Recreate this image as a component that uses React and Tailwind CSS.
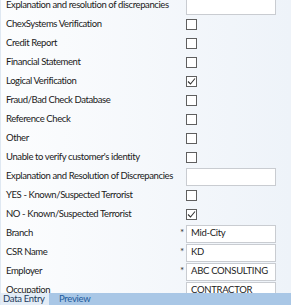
import React from 'react';

const rows = [
  { label: 'Explanation and resolution of discrepancies', type: 'input', value: '' },
  { label: 'ChexSystems Verification', type: 'check' },
  { label: 'Credit Report', type: 'check' },
  { label: 'Financial Statement', type: 'check' },
  { label: 'Logical Verification', type: 'check', checked: true },
  { label: 'Fraud/Bad Check Database', type: 'check' },
  { label: 'Reference Check', type: 'check' },
  { label: 'Other', type: 'check' },
  { label: "Unable to verify customer's identity", type: 'check' },
  { label: 'Explanation and Resolution of Discrepancies', type: 'input', value: '' },
  { label: 'YES - Known/Suspected Terrorist', type: 'check' },
  { label: 'NO - Known/Suspected Terrorist', type: 'check', checked: true },
  { label: 'Branch', type: 'input', value: 'Mid-City', required: true },
  { label: 'CSR Name', type: 'input', value: 'KD', required: true },
  { label: 'Employer', type: 'input', value: 'ABC CONSULTING', required: true },
  { label: 'Occupation', type: 'input', value: 'CONTRACTOR' },
];

const CheckBox = ({ checked }) => (
  <div className="w-[11px] h-[11px] border border-[#5f5f5f] bg-white flex items-center justify-center">
    {checked && (
      <svg width="9" height="9" viewBox="0 0 9 9">
        <path d="M1 4.5 L3.5 7 L8 1.5" fill="none" stroke="#333" strokeWidth="1.1" />
      </svg>
    )}
  </div>
);

const App = () => {
  return (
    <div
      className="w-[291px] h-[305px] overflow-hidden flex flex-col bg-gradient-to-r from-[#fcfdfe] to-[#eef3f9] border-l border-[#dfe8f2] text-[9.5px] text-[#1a1a1a]"
      style={{ fontFamily: 'Lato, "Open Sans", sans-serif' }}
    >
      <div className="flex-1 overflow-hidden">
        <div className="-mt-[4px]">
          {rows.map((row, i) => (
            <div key={i} className="h-[19px] flex items-center">
              <div className="w-[179px] pl-[5px] whitespace-nowrap overflow-hidden tracking-[-0.4px]">
                {row.label}
              </div>
              <div className="w-[6px] text-[10px] leading-none self-start pt-[3px] text-[#333]">
                {row.required ? '*' : ''}
              </div>
              {row.type === 'check' ? (
                <CheckBox checked={row.checked} />
              ) : (
                <div className="w-[90px] h-[18px] bg-white border border-[#c9ccd1] pl-[4px] flex items-center whitespace-nowrap tracking-[-0.3px] text-[#222]">
                  {row.value}
                </div>
              )}
            </div>
          ))}
        </div>
      </div>
      <div className="h-[12px] bg-[#a9c7e6] flex items-stretch text-[9.5px] leading-none whitespace-nowrap tracking-[-0.3px]">
        <div className="w-[48px] bg-[#e3ecf6] pl-[2px] flex items-center text-[#1f3b5c]">Data Entry</div>
        <div className="pl-[10px] flex items-center text-[#1c5a9c]">Preview</div>
      </div>
    </div>
  );
};

export default App;
